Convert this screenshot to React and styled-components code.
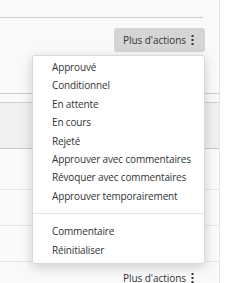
import * as React from "react"
import styled, { createGlobalStyle } from "styled-components"

const GlobalStyle = createGlobalStyle`
  html, body {
    margin: 0;
    padding: 0;
    background: #ffffff;
  }
  body {
    font-family: "Open Sans", "Noto Sans", sans-serif;
    font-size: 10px;
    color: #333333;
  }
`

const menuItems = [
  ["Approuvé", "Conditionnel", "En attente", "En cours", "Rejeté", "Approuver avec commentaires", "Révoquer avec commentaires", "Approuver temporairement"],
  ["Commentaire", "Réinitialiser"],
]

const Dots = () => (
  <svg width="3" height="10" viewBox="0 0 3 10">
    <rect x="0.5" y="0" width="2" height="2" fill="#333333" />
    <rect x="0.5" y="4" width="2" height="2" fill="#333333" />
    <rect x="0.5" y="8" width="2" height="2" fill="#333333" />
  </svg>
)

export default function App() {
  return (
    <>
      <GlobalStyle />
      <Page>
        <Main>
          <HeaderRule />
          <Toolbar>
            <ActionsWrap>
              <ActionsButton $active>
                Plus d'actions <Dots />
              </ActionsButton>
              <Menu>
                {menuItems.map((group, gi) => (
                  <MenuGroup key={gi} $first={gi === 0}>
                    {group.map((label) => (
                      <MenuItem key={label}>{label}</MenuItem>
                    ))}
                  </MenuGroup>
                ))}
              </Menu>
            </ActionsWrap>
          </Toolbar>
          <Table>
            <TableTop />
            <TableHead />
            <TableRow $height={40} />
            <TableRow $height={35} />
            <TableRow $height={35} />
          </Table>
          <Footer>
            <ActionsButton>
              Plus d'actions <Dots />
            </ActionsButton>
          </Footer>
        </Main>
        <Side />
      </Page>
    </>
  )
}

const Page = styled.div`
  display: flex;
  height: 283px;
  overflow: hidden;
`

const Main = styled.section`
  width: 219px;
  flex-shrink: 0;
  background: #f9f9f9;
  border-right: 1px solid #e6e6e6;
`

const Side = styled.aside`
  flex: 1;
  background: #ffffff;
`

const HeaderRule = styled.div`
  height: 17px;
  margin-right: 16px;
  border-bottom: 1px solid #cfcfcf;
`

const Toolbar = styled.div`
  display: flex;
  justify-content: flex-end;
  padding-top: 10px;
  padding-right: 14px;
`

const ActionsWrap = styled.div`
  position: relative;
`

const ActionsButton = styled.div`
  display: flex;
  align-items: center;
  gap: 5px;
  box-sizing: border-box;
  width: 91px;
  height: 24px;
  padding-left: 9px;
  border-radius: 3px;
  background: ${(p) => (p.$active ? "#d5d5d5" : "transparent")};
  color: #333333;
  font-size: 10px;
  letter-spacing: -0.05px;
  white-space: nowrap;
`

const Menu = styled.div`
  position: absolute;
  top: 27px;
  right: 0;
  width: 173px;
  box-sizing: border-box;
  background: #ffffff;
  border: 1px solid #d9d9d9;
  border-radius: 3px;
  box-shadow: 0 3px 12px rgba(0, 0, 0, 0.18);
  padding: 2px 0 4px;
  z-index: 10;
`

const MenuGroup = styled.div`
  padding: ${(p) => (p.$first ? "0 0 8px" : "8px 0 0")};
  border-top: ${(p) => (p.$first ? "none" : "1px solid #e3e3e3")};
`

const MenuItem = styled.div`
  padding-left: 19px;
  line-height: 18.4px;
  font-size: 10px;
  letter-spacing: -0.15px;
  color: #333333;
  white-space: nowrap;
`

const Table = styled.div`
  margin-top: 41px;
`

const TableTop = styled.div`
  height: 8px;
  border-top: 1px solid #cccccc;
`

const TableHead = styled.div`
  height: 45px;
  background: #f0f0f0;
  border-top: 1px solid #d2d2d2;
  border-bottom: 1px solid #cccccc;
`

const TableRow = styled.div`
  height: ${(p) => p.$height}px;
  background: #fafafa;
  border-bottom: 1px solid #e6e6e6;
`

const Footer = styled.div`
  display: flex;
  justify-content: flex-end;
  padding-right: 14px;
  padding-top: 4px;
`
